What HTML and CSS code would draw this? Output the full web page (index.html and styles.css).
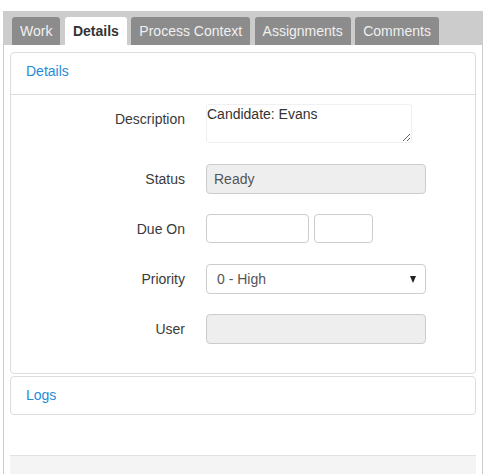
FILE: index.html
```
<!DOCTYPE html>
<html>
<head>
<meta charset="utf-8">
<link rel="stylesheet" href="styles.css">
</head>
<body>
<div class="frame">
  <div class="tabbar">
    <div class="tab">Work</div>
    <div class="tab active">Details</div>
    <div class="tab">Process Context</div>
    <div class="tab">Assignments</div>
    <div class="tab">Comments</div>
  </div>
  <div class="content">
    <div class="panel">
      <div class="panel-heading">Details</div>
      <div class="panel-body">
        <div class="row row-textarea">
          <label class="label">Description</label>
          <textarea class="textarea">Candidate: Evans</textarea>
        </div>
        <div class="row">
          <label class="label">Status</label>
          <input class="input input-wide input-disabled" value="Ready" disabled>
        </div>
        <div class="row">
          <label class="label">Due On</label>
          <div class="due">
            <input class="input input-date">
            <input class="input input-time">
          </div>
        </div>
        <div class="row">
          <label class="label">Priority</label>
          <div class="select-wrap">
            <select class="input input-wide select"><option>0 - High</option></select>
            <span class="caret"></span>
          </div>
        </div>
        <div class="row">
          <label class="label">User</label>
          <input class="input input-wide input-disabled" disabled>
        </div>
      </div>
    </div>
    <div class="panel panel-logs">
      <div class="panel-heading panel-heading-plain">Logs</div>
    </div>
    <div class="footer"></div>
  </div>
</div>
</body>
</html>
```
FILE: styles.css
```
html, body {
  margin: 0;
  padding: 0;
  background: #fff;
  font-family: "Liberation Sans", Arial, sans-serif;
  font-size: 14px;
  color: #333;
}
.frame {
  box-sizing: border-box;
  margin: 11px 0 0 3px;
  width: 480px;
  height: 463px;
  border-left: 1px solid #cccccc;
  border-right: 1px solid #cccccc;
  display: flex;
  flex-direction: column;
}
.tabbar {
  background: #cccccc;
  height: 34px;
  box-sizing: border-box;
  padding: 6px 0 0 8px;
  display: flex;
  gap: 4.5px;
}
.tab {
  height: 28px;
  line-height: 29px;
  padding: 0 8px;
  background: #8c8c8c;
  color: #f0f0f0;
  border-radius: 3px 3px 0 0;
  white-space: nowrap;
}
.tab.active {
  background: #fff;
  color: #333;
  font-weight: bold;
}
.content {
  flex: 1;
  padding: 7px 6px 0 6px;
  display: flex;
  flex-direction: column;
}
.panel {
  border: 1px solid #dddddd;
  border-radius: 4px;
  background: #fff;
}
.panel-heading {
  padding: 8px 15px 13px;
  line-height: 20px;
  color: #1f8dd6;
  border-bottom: 1px solid #dddddd;
}
.panel-heading-plain {
  border-bottom: none;
  padding: 8px 15px 9px;
}
.panel-logs {
  margin-top: 2px;
}
.panel-body {
  padding: 9px 0 29px;
  display: flex;
  flex-direction: column;
  gap: 20px;
}
.row {
  display: flex;
  align-items: flex-start;
  gap: 21px;
}
.row-textarea {
  margin-bottom: 1px;
}
.label {
  width: 174px;
  text-align: right;
  line-height: 30px;
  height: 30px;
  color: #3a3a3a;
}
.textarea {
  box-sizing: border-box;
  width: 206px;
  height: 39px;
  margin: 0;
  padding: 1px 0 0 0;
  border: 1px solid #f0f0f0;
  border-radius: 3px;
  font-family: "Liberation Sans", Arial, sans-serif;
  font-size: 14px;
  line-height: 16px;
  color: #333;
  resize: both;
  outline: none;
}
.input {
  box-sizing: border-box;
  height: 30px;
  margin: 0;
  border: 1px solid #cccccc;
  border-radius: 4px;
  padding: 0 7px;
  font-family: "Liberation Sans", Arial, sans-serif;
  font-size: 14px;
  color: #555;
  background: #fff;
  outline: none;
}
.input-wide {
  width: 220px;
}
.input-disabled {
  background: #eeeeee;
  color: #555;
  -webkit-text-fill-color: #555;
  opacity: 1;
}
.due {
  display: flex;
  gap: 5px;
}
.input-date {
  width: 103px;
  height: 29px;
}
.input-time {
  width: 59px;
  height: 29px;
}
.select-wrap {
  position: relative;
  width: 220px;
  height: 30px;
}
.select {
  -webkit-appearance: none;
  appearance: none;
  padding-left: 10px;
  color: #555;
}
.caret {
  position: absolute;
  right: 10px;
  top: 12px;
  width: 0;
  height: 0;
  border-left: 3.5px solid transparent;
  border-right: 3.5px solid transparent;
  border-top: 7px solid #222;
}
.footer {
  margin-top: 40px;
  flex: 1;
  background: #f4f4f4;
  border-top: 1px solid #e2e2e2;
}
```
